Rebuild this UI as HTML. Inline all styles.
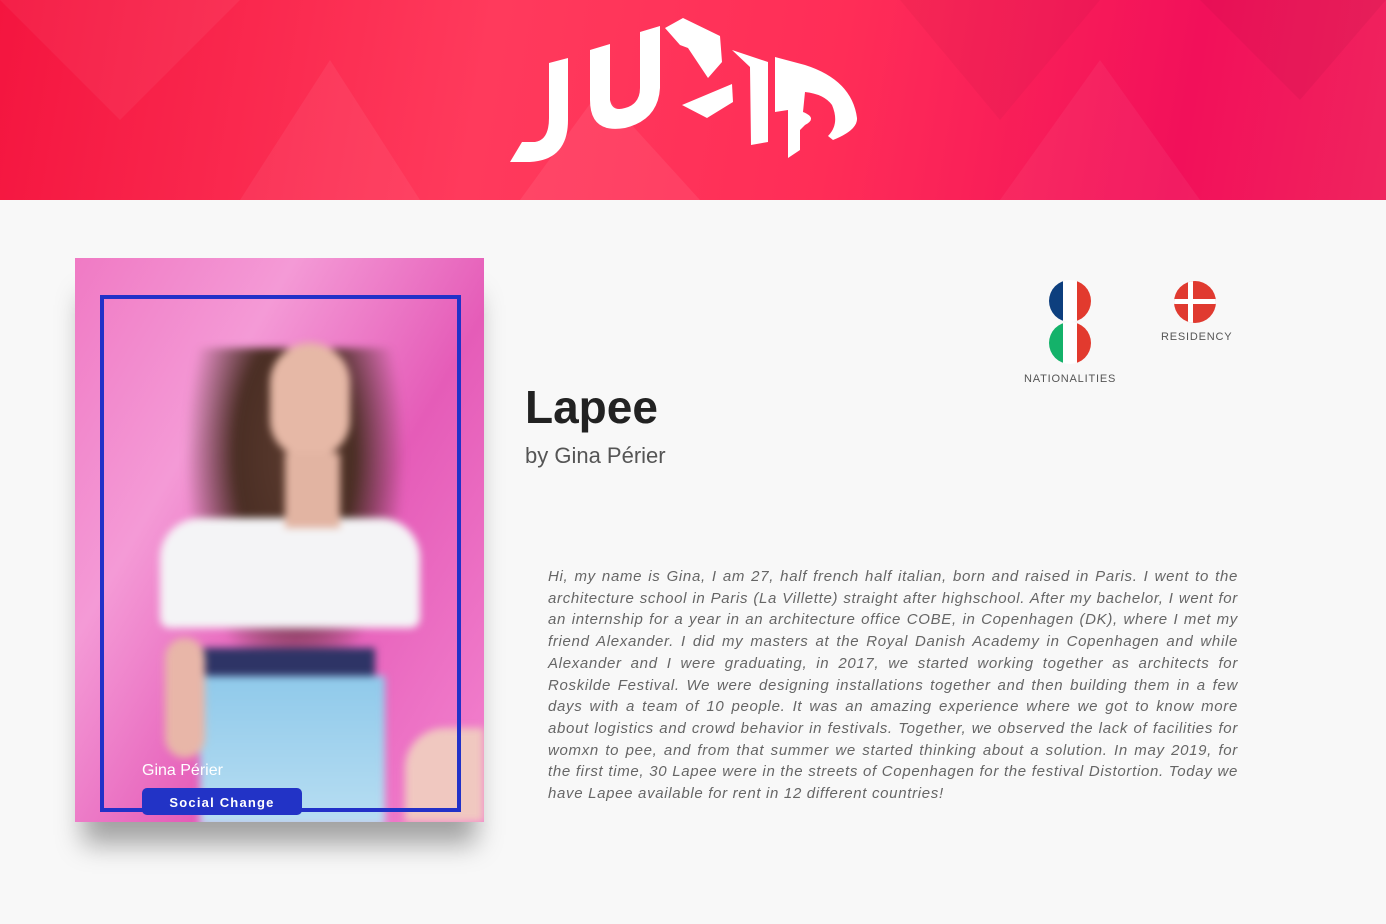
<!DOCTYPE html>
<html><head><meta charset="utf-8"><style>
*{margin:0;padding:0;box-sizing:border-box}
body{width:1386px;height:924px;background:#f8f8f8;font-family:"Liberation Sans",sans-serif;position:relative;overflow:hidden}
.hdr{position:absolute;left:0;top:0;width:1386px;height:200px;background:linear-gradient(100deg,#f4153f 0%,#ff3a5c 35%,#ff2d57 60%,#f2105a 85%,#f0245e 100%);overflow:hidden}
.card{position:absolute;left:75px;top:258px;width:409px;height:564px;overflow:hidden;background:linear-gradient(120deg,#f07ac4 0%,#f49ad6 30%,#e55cb8 60%,#f383cf 100%);box-shadow:0 30px 25px -8px rgba(0,0,0,.35)}
.fig{position:absolute;left:0;top:0;width:409px;height:564px;filter:blur(4px)}
.frame{position:absolute;left:25px;top:37px;width:361px;height:517px;border:4px solid #2231c8}
.name{position:absolute;left:67px;top:504px;color:#fff;font-size:16px}
.badge{position:absolute;left:67px;top:530px;width:160px;height:27px;background:#2233c6;border-radius:5px;color:#fff;font-weight:bold;font-size:13px;letter-spacing:1.2px;text-align:center;line-height:29px}
h1{position:absolute;left:525px;top:380px;font-size:46px;font-weight:bold;color:#222}
.by{position:absolute;left:525px;top:443px;font-size:22px;color:#555}
.txt{position:absolute;left:548px;top:566px;width:690px;font-size:15px;letter-spacing:0.68px;line-height:21.7px;font-style:italic;color:#666;text-align:justify}
.lbl{position:absolute;font-size:11px;letter-spacing:0.8px;color:#555}
</style></head><body>
<div class="hdr">
<svg width="1386" height="200" style="position:absolute;left:0;top:0">
<polygon points="0,0 120,120 240,0" fill="#fff" opacity=".05"/>
<polygon points="240,200 330,60 420,200" fill="#fff" opacity=".06"/>
<polygon points="520,200 600,90 700,200" fill="#fff" opacity=".07"/>
<polygon points="900,0 1000,120 1100,0" fill="#000" opacity=".03"/>
<polygon points="1000,200 1100,60 1200,200" fill="#fff" opacity=".05"/>
<polygon points="1200,0 1300,100 1386,0" fill="#000" opacity=".04"/>
<g fill="#fff">
<path d="M549,63 L568,58 L568,120 Q568,160 530,162 L510,162 L522,142 L535,142 Q549,140 549,118 Z"/>
<path d="M590,50 L610,44 L610,100 Q612,112 625,108 Q640,104 640,88 L640,32 L660,26 L660,88 Q658,120 625,128 Q590,134 590,100 Z"/>
<path d="M665,28 L683,18 L720,36 L722,62 L708,78 L688,48 L680,45 Z"/>
<path d="M682,105 L732,84 L733,102 L707,118 Z"/>
<path d="M732,50 L768,62 L768,142 L751,145 L750,67 Z"/>
<path d="M775,57 L805,65 Q852,80 857,118 Q858,130 833,140 L828,136 Q840,124 832,105 Q824,94 805,92 L803,112 Q818,118 805,125 L800,130 L800,150 L788,158 L788,110 L775,112 Z"/>
</g></svg>
</div>
<div class="card">
<div class="fig">
<div style="position:absolute;left:100px;top:90px;width:240px;height:360px;background:radial-gradient(ellipse at 50% 30%,#5a3a2e 0,#4a2e24 35%,rgba(74,46,36,0) 65%)"></div>
<div style="position:absolute;left:85px;top:260px;width:260px;height:110px;background:#f4f4f6;border-radius:40px 40px 10px 10px"></div>
<div style="position:absolute;left:120px;top:390px;width:180px;height:30px;background:#2e3466"></div>
<div style="position:absolute;left:125px;top:418px;width:185px;height:150px;background:linear-gradient(180deg,#8fc9ea,#b8def2)"></div>
<div style="position:absolute;left:195px;top:85px;width:80px;height:115px;background:#e6b8a6;border-radius:40px 40px 38px 38px"></div>
<div style="position:absolute;left:210px;top:195px;width:55px;height:75px;background:#e2b4a2"></div>
<div style="position:absolute;left:330px;top:470px;width:79px;height:94px;background:#f0c8c0;border-radius:40px 0 0 0"></div>
<div style="position:absolute;left:90px;top:380px;width:40px;height:120px;background:#e8b6a8;border-radius:20px"></div>
</div>
<div class="frame"></div>
<div class="name">Gina Périer</div>
<div class="badge">Social Change</div>
</div>
<h1>Lapee</h1>
<div class="by">by Gina Périer</div>
<svg width="60" height="90" style="position:absolute;left:1040px;top:278px">
<defs><clipPath id="a"><circle cx="30" cy="23" r="21"/></clipPath><clipPath id="b"><circle cx="30" cy="65" r="21"/></clipPath></defs>
<g clip-path="url(#a)"><rect x="9" y="0" width="14" height="50" fill="#0d3f7e"/><rect x="23" y="0" width="14" height="50" fill="#fff"/><rect x="37" y="0" width="14" height="50" fill="#e23a2e"/></g>
<g clip-path="url(#b)"><rect x="9" y="40" width="14" height="50" fill="#14b26a"/><rect x="23" y="40" width="14" height="50" fill="#fff"/><rect x="37" y="40" width="14" height="50" fill="#e23a2e"/></g>
</svg>
<svg width="46" height="46" style="position:absolute;left:1172px;top:279px">
<defs><clipPath id="c"><circle cx="23" cy="23" r="21"/></clipPath></defs>
<g clip-path="url(#c)"><rect width="46" height="46" fill="#e03a30"/><rect x="16" width="5" height="46" fill="#fff"/><rect y="20" width="46" height="5" fill="#fff"/></g>
</svg>
<div class="lbl" style="left:1024px;top:373px">NATIONALITIES</div>
<div class="lbl" style="left:1161px;top:331px">RESIDENCY</div>
<div class="txt">Hi, my name is Gina, I am 27, half french half italian, born and raised in Paris. I went to the architecture school in Paris (La Villette) straight after highschool. After my bachelor, I went for an internship for a year in an architecture office COBE, in Copenhagen (DK), where I met my friend Alexander. I did my masters at the Royal Danish Academy in Copenhagen and while Alexander and I were graduating, in 2017, we started working together as architects for Roskilde Festival. We were designing installations together and then building them in a few days with a team of 10 people. It was an amazing experience where we got to know more about logistics and crowd behavior in festivals. Together, we observed the lack of facilities for womxn to pee, and from that summer we started thinking about a solution. In may 2019, for the first time, 30 Lapee were in the streets of Copenhagen for the festival Distortion. Today we have Lapee available for rent in 12 different countries!</div>
</body></html>
